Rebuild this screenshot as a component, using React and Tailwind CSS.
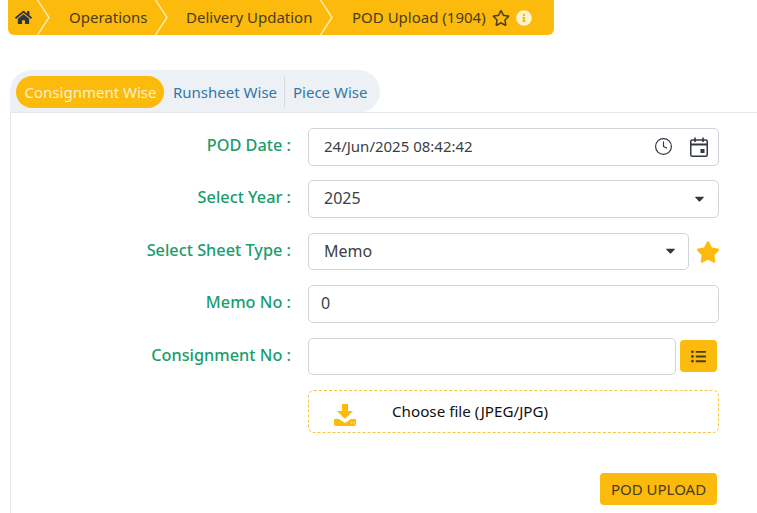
import { FaHome, FaRegStar, FaStar, FaInfoCircle, FaListUl, FaCaretDown } from 'react-icons/fa';
import { FiClock } from 'react-icons/fi';

const crumbs = [
  { label: 'Operations', width: 'w-[105px]', pad: 'pl-[19px]' },
  { label: 'Delivery Updation', width: 'w-[152px]', pad: 'pl-[18px]' },
];

function Chevron() {
  return (
    <svg width="13" height="35" viewBox="0 0 13 35" className="shrink-0">
      <path d="M0.5 0 L12 17.5 L0.5 35" fill="none" stroke="#ffeeb0" strokeWidth="1.4" />
    </svg>
  );
}

function Row({ label, children }) {
  return (
    <div className="mb-[14.9px] flex items-center gap-[17px]">
      <label className="w-[280px] pb-[3px] text-right text-[16.3px] font-medium text-[#1a9c6c]">{label}</label>
      {children}
    </div>
  );
}

function Box({ children, width = 'w-[411px]' }) {
  return (
    <div className={`flex h-[37.5px] ${width} items-center rounded-[5px] border border-[#ced4da] bg-white px-[15px] pb-[2px] text-[16px] text-[#3b3f44]`}>
      {children}
    </div>
  );
}

export default function App() {
  return (
    <div className="h-[513px] w-[757px] overflow-hidden bg-white font-['Noto_Sans',sans-serif]">
      {/* Breadcrumb */}
      <div className="ml-2 flex h-[35px] w-[546px] items-center whitespace-nowrap rounded-b-[6px] bg-[#fbba0c] text-[15px] text-[#4b3d18]">
        <div className="flex w-[29px] justify-end pr-[5px]">
          <FaHome size={17} className="text-[#2f3640]" />
        </div>
        <Chevron />
        {crumbs.map((c) => (
          <div key={c.label} className="flex items-center">
            <span className={`${c.width} ${c.pad}`}>{c.label}</span>
            <Chevron />
          </div>
        ))}
        <span className="ml-[19px]">POD Upload (1904)</span>
        <FaRegStar size={18} className="ml-[6px] text-[#4b3d18]" />
        <FaInfoCircle size={16} className="ml-[6px] text-[#fff3cf]" />
      </div>

      {/* Tabs */}
      <div className="ml-[10px] mt-[35px] flex h-[43px] w-[370px] items-center rounded-t-[22px] rounded-br-[22px] bg-[#edf0f5] pl-[6px] pt-[1px] text-[15px]">
        <div className="flex h-[32px] w-[148px] items-center justify-center rounded-full bg-[#fbba0c] pl-[1px] text-[#fdf0c8]">
          Consignment Wise
        </div>
        <span className="w-[120px] pl-[9px] text-[#2f78a8]">Runsheet Wise</span>
        <span className="flex h-[30px] items-center border-l border-[#d5d9df] pl-[8px] text-[#2f78a8]">Piece Wise</span>
      </div>

      {/* Form */}
      <div className="ml-[10px] -mt-[1px] h-[401px] border-l border-t border-[#e5e7eb] pt-[15px]">
        <Row label="POD Date :">
          <Box>
            <span className="flex-1 text-[15px]">24/Jun/2025 08:42:42</span>
            <FiClock size={19} className="mt-[2px] text-[#33383d]" strokeWidth={1.5} />
            <svg width="18" height="20" viewBox="0 0 18 20" className="ml-[17px] -mr-[5px] mt-[2px] text-[#33383d]">
              <rect x="0.75" y="3" width="16.5" height="16.25" rx="1.5" fill="none" stroke="currentColor" strokeWidth="1.5" />
              <path d="M1 7.5h16" stroke="currentColor" strokeWidth="2" />
              <path d="M5 0.5v4.5M13 0.5v4.5" stroke="currentColor" strokeWidth="1.6" />
              <rect x="10.5" y="12" width="4" height="4" fill="currentColor" />
            </svg>
          </Box>
        </Row>
        <Row label="Select Year :">
          <Box>
            <span className="flex-1">2025</span>
            <FaCaretDown size={15} className="-mr-[4px] text-[#33383d]" />
          </Box>
        </Row>
        <Row label="Select Sheet Type :">
          <div className="flex items-center">
            <Box width="w-[381px]">
              <span className="flex-1">Memo</span>
              <FaCaretDown size={15} className="-mr-[5px] text-[#33383d]" />
            </Box>
            <FaStar size={24} className="ml-[7px] text-[#fbba0c]" />
          </div>
        </Row>
        <Row label="Memo No :">
          <Box>
            <span className="-ml-[3px]">0</span>
          </Box>
        </Row>
        <Row label="Consignment No :">
          <div className="flex items-center">
            <Box width="w-[368px]" />
            <div className="ml-[4px] flex h-[32px] w-[37px] items-center justify-center rounded-[4px] bg-[#fbba0c]">
              <FaListUl size={15} className="text-[#4b3d18]" />
            </div>
          </div>
        </Row>
        <div className="ml-[297px] flex h-[43px] w-[411px] items-center rounded-[6px] border border-dashed border-[#f4c542] text-[15.2px] text-[#111]">
          <svg width="24" height="22" viewBox="0 0 24 22" className="ml-[24px] mt-[7px] text-[#fbba0c]">
            <path d="M9 0h6v7h5l-8 8-8-8h5z" fill="currentColor" />
            <path d="M1 15h5l6 4 6-4h5v5a2 2 0 0 1-2 2H3a2 2 0 0 1-2-2z" fill="currentColor" />
            <path d="M18 19h1M20.5 19h1" stroke="#fff" strokeWidth="1" />
          </svg>
          <span className="ml-[35px]">Choose file (JPEG/JPG)</span>
        </div>
        <div className="ml-[589px] mt-[40px] flex h-[32px] w-[117px] items-center justify-center rounded-[4px] bg-[#fbba0c] text-[15px] text-[#4b3d18]">
          POD UPLOAD
        </div>
      </div>
    </div>
  );
}
